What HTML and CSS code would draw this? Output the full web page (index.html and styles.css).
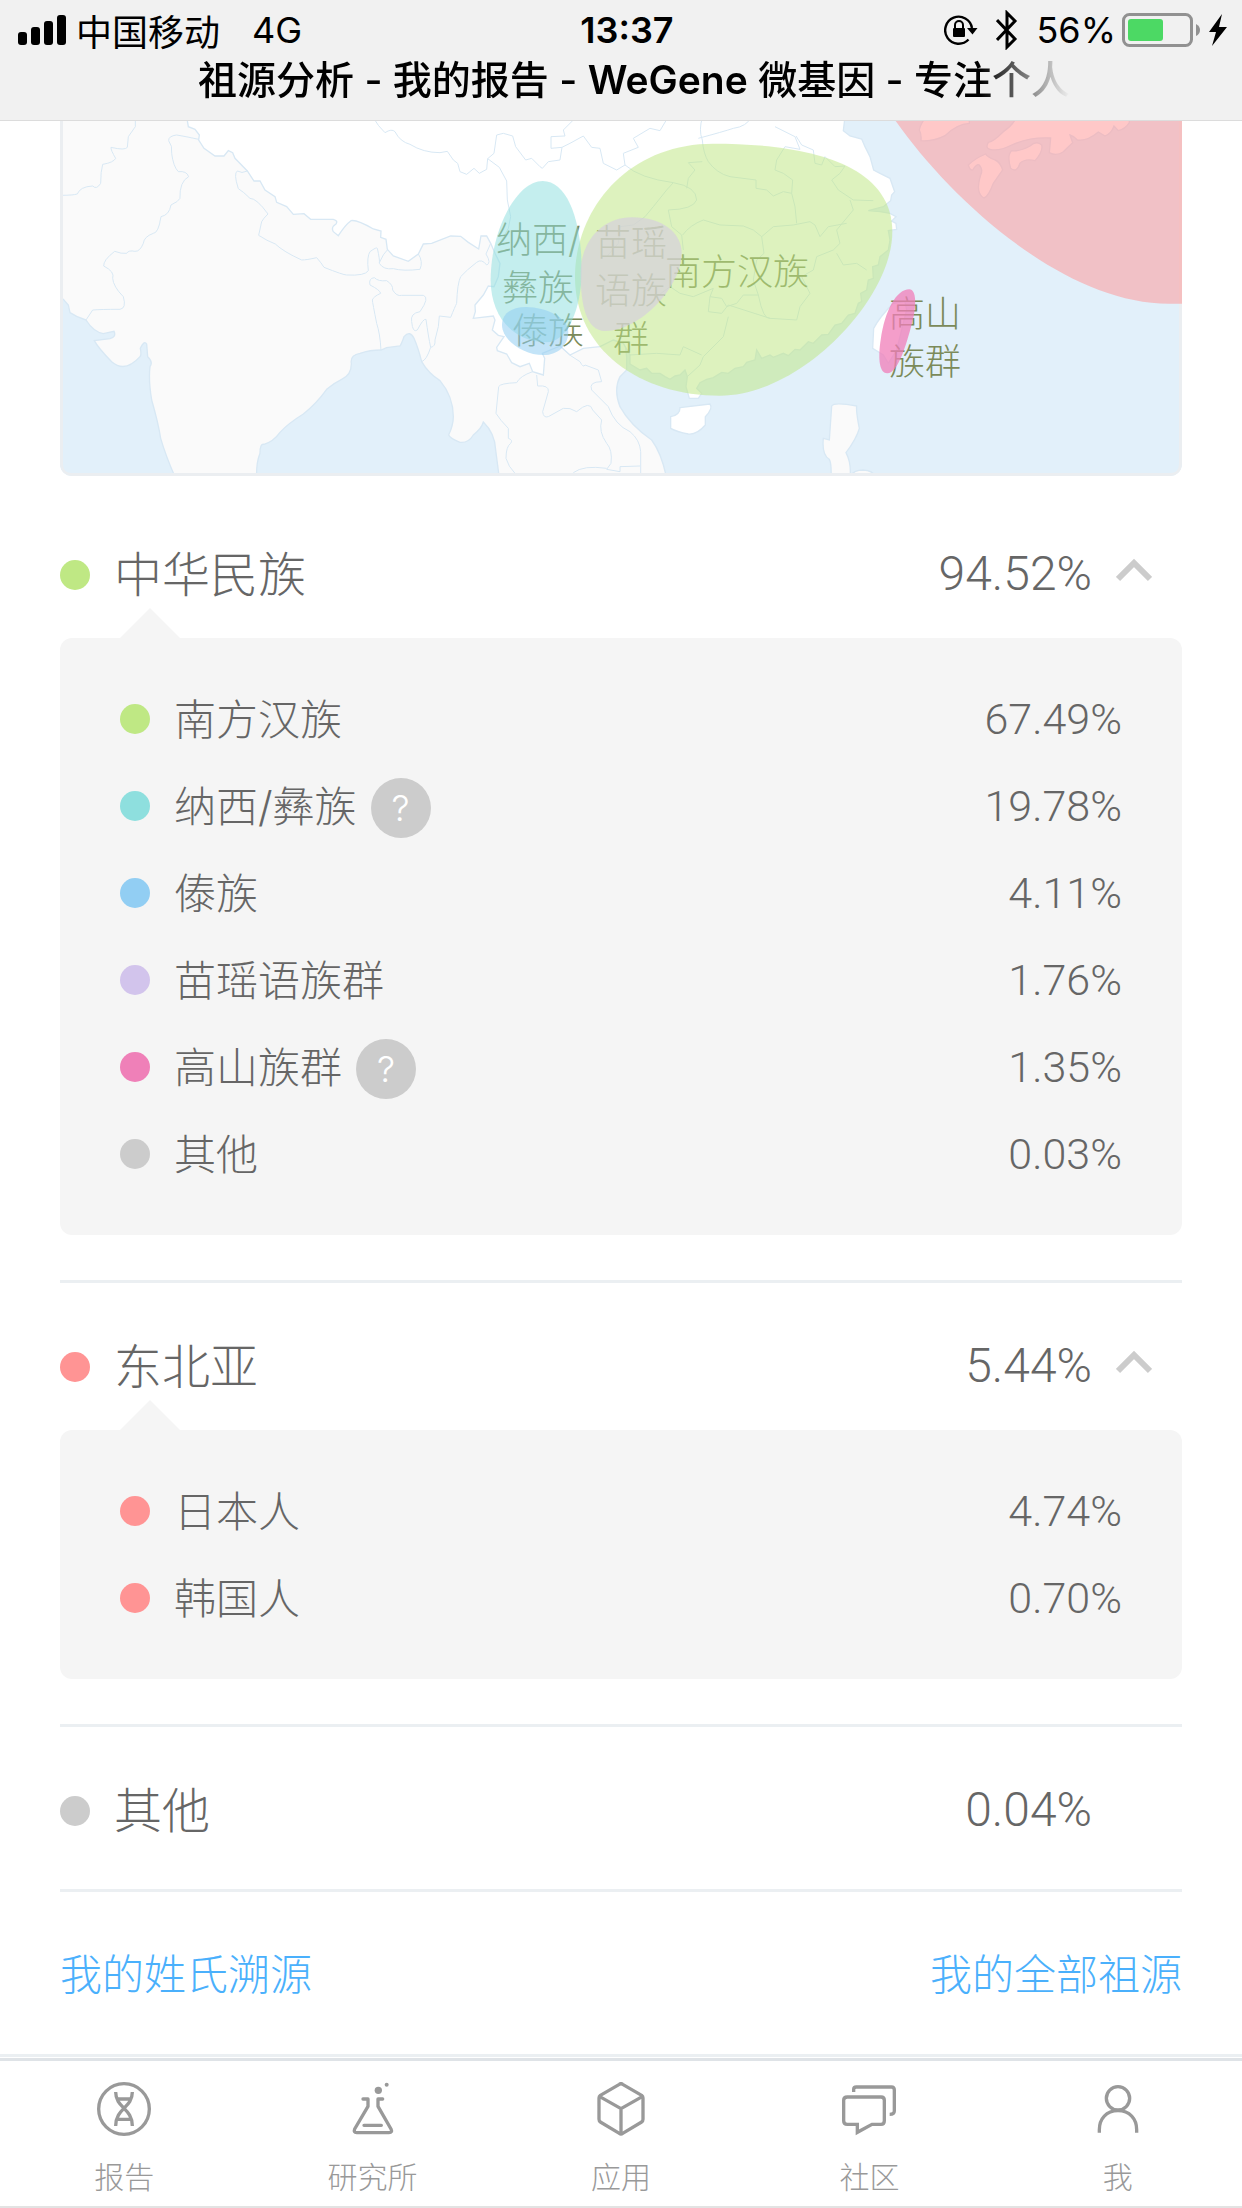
FILE: index.html
```html
<!DOCTYPE html>
<html lang="zh-CN">
<head>
    <meta charset="UTF-8">
    <meta name="viewport" content="width=device-width, initial-scale=1.0">
    <title>祖源分析 - 我的报告 - WeGene 微基因</title>
    <link rel="stylesheet" href="styles.css">
</head>
<body>
    <header class="header">
        <div class="status">
            <div class="status-left">
                <svg class="signal" width="48" height="30" viewBox="0 0 48 30" aria-hidden="true">
                    <rect x="0" y="17" width="9" height="13" rx="3"/>
                    <rect x="13" y="12" width="9" height="18" rx="3"/>
                    <rect x="26" y="6" width="9" height="24" rx="3"/>
                    <rect x="39" y="0" width="9" height="30" rx="3"/>
                </svg>
                <span>中国移动</span>
                <span class="network">4G</span>
            </div>
            <time class="clock">13:37</time>
            <div class="status-right">
                <svg width="34" height="32" viewBox="0 0 34 32" aria-hidden="true">
                    <path d="M24.500 25.500A13.500 13.500 0 1 1 28 14" fill="none" stroke="#000" stroke-width="2.400"/>
                    <path d="M23 14h10.500l-5 6.500z"/>
                    <rect x="9" y="14" width="12" height="9" rx="1"/>
                    <path d="M11 14v-3a4 4 0 0 1 8 0v3" fill="none" stroke="#000" stroke-width="2"/>
                </svg>
                <svg class="bluetooth" width="22" height="40" viewBox="0 0 22 40" aria-hidden="true">
                    <path d="M1 10l18 19-8 8V3l8 8L1 30" fill="none" stroke="#000" stroke-width="3"/>
                </svg>
                <span>56%</span>
                <svg width="80" height="34" viewBox="0 0 80 34" aria-hidden="true">
                    <rect x="1.500" y="1.500" width="68" height="31" rx="6" fill="none" stroke="#919191" stroke-width="3"/>
                    <rect x="6" y="6" width="35" height="22" rx="3" fill="#4cd964"/>
                    <path d="M74 11q4 2 4 6t-4 6z" fill="#919191"/>
                </svg>
                <svg width="20" height="34" viewBox="0 0 20 34" aria-hidden="true">
                    <path d="M14 1L1 19h7L4 33l15-19h-8z"/>
                </svg>
            </div>
        </div>
        <h1 class="title">祖源分析 - 我的报告 - <b class="brand">WeGene</b> 微基因 - 专注个人</h1>
    </header>

    <main class="content">
        <svg class="map" viewBox="60 121 1122 355" role="img" aria-label="祖源分布地图">
            <rect class="sea" x="60" y="110" width="1122" height="366"/>
            <!-- mainland -->
            <g transform="translate(40 110) scale(.33333)">
                <path class="land" d="M50 0V560L70 568 85 585 90 608Q110 622 138 630Q160 665 190 671L222 664Q230 680 210 686L163 692Q175 715 215 755Q255 790 300 740Q305 735 301 715Q312 690 320 702L323 740Q340 755 330 770Q325 810 335 870Q355 940 362 985Q378 1040 407 1105H650Q648 1060 660 1030Q660 1000 672 1003Q700 995 720 967Q745 940 790 912Q830 880 860 838Q880 820 905 808Q935 795 934 760Q930 735 960 730Q990 720 1023 720L1040 713 1080 708Q1085 700 1092 680Q1110 660 1122 685Q1135 715 1145 755Q1165 790 1200 812Q1240 860 1240 920Q1240 945 1226 975Q1230 985 1260 997Q1285 1000 1300 975Q1325 955 1330 936Q1365 970 1367 1020L1378 1105H1880Q1865 1030 1835 990Q1770 945 1740 890Q1720 840 1740 800L1760 780V740L1700 200 1300 0Z"/>
                <path class="china" d="M440 20L445 50 465 58 478 75 476 90 492 115 525 138H552L565 122 578 128 585 145 622 183 642 213H660L675 240 705 260 710 277 740 290 760 313 792 311 812 328H880Q895 332 888 342Q872 352 880 365L895 377Q915 345 933 332Q950 328 1000 357L1023 363 1022 382 1038 388 1042 418 1060 438 1105 454 1135 432 1150 402 1175 400 1232 378 1262 379 1285 397 1316 417 1323 378 1340 378 1352 400 1365 430 1380 460 1375 500 1362 530 1345 528 1330 555 1305 585 1306 605 1300 625 1360 618 1365 630 1357 660 1375 676 1392 680 1370 712 1372 722 1400 732 1415 758 1440 770 1468 760 1478 785 1510 795 1514 745 1507 730 1560 708 1590 735 1630 715 1680 710 1720 690 1750 700 1770 735 1770 762 1800 780 1820 775 1835 790 1860 790 1875 800 1890 808 1905 798 1920 795 1935 780 1942 800 1938 830 1948 865H1975L1985 850 1970 835 1980 818 2000 808 2020 803 2045 787 2065 790 2085 775 2110 770 2120 757 2145 750 2150 720 2165 745 2190 735 2200 742 2230 730 2245 737 2265 718 2280 720 2305 695 2320 700 2345 675 2365 673 2385 645 2405 640 2425 615 2445 610 2455 580 2465 575 2462 550 2480 540 2485 510 2500 505 2498 470 2515 465 2520 440 2545 420 2550 390 2545 362 2570 358 2568 340 2555 333 2568 320 2550 310 2520 305 2485 302 2530 290 2552 272 2555 255 2564 245 2550 205 2520 190 2501 180 2490 140 2475 110 2465 87 2430 78 2410 62 2415 20Z"/>
                <g class="borders">
                    <path d="M286 20V50L265 80 262 112Q255 122 213 112Q212 120 227 145Q220 158 188 163Q182 185 182 220Q170 240 158 228Q120 230 112 252Q100 256 60 256"/>
                    <path d="M476 88Q440 80 410 75Q385 78 386 92Q398 108 395 130Q400 170 415 185Q440 182 446 200Q418 215 420 265Q415 275 393 285Q388 315 363 320Q355 370 340 370Q312 380 310 400Q300 425 285 424Q265 420 260 430Q245 432 224 424Q190 450 191 468Q225 485 218 505Q220 530 250 560Q260 595 240 598Q180 598 158 600L138 630"/>
                    <path d="M622 183Q605 192 592 183Q580 190 595 236Q610 245 630 265Q650 265 684 312Q670 325 665 335L656 376Q680 392 706 402Q730 425 785 450Q800 450 830 443Q845 460 852 472Q910 495 920 495Q975 498 985 482Q980 440 990 425Q1010 410 1012 415Q1020 450 1018 460Q1030 480 1060 476Q1090 484 1140 478Q1150 455 1135 432M1018 458Q1030 430 1042 420"/>
                    <path d="M1023 720Q1020 670 1010 640Q998 580 997 570Q1000 560 1022 550Q1020 540 990 525Q985 505 1003 503Q1015 515 1040 512Q1060 525 1058 540Q1070 560 1085 556H1150Q1170 562 1140 605Q1110 610 1115 635Q1118 670 1132 660Q1150 625 1158 628Q1165 680 1172 712Q1160 750 1145 755M1172 712Q1187 710 1185 690L1195 650 1198 618 1232 622Q1245 590 1250 580Q1252 520 1262 500Q1280 480 1310 457Q1325 445 1340 465Q1355 460 1338 432L1352 400"/>
                    <path d="M998 20Q1015 50 1035 68Q1055 55 1065 65Q1080 95 1110 103Q1150 128 1200 128L1222 124 1240 150 1253 160 1260 185 1280 193 1302 175 1318 190 1340 178 1343 146 1362 130 1370 75 1390 70 1418 78 1427 110 1457 150 1475 145 1500 170 1507 175 1525 155 1560 150 1566 112 1533 115V80L1575 78 1570 60 1610 20"/>
                    <path d="M1343 146L1378 172 1400 213 1402 270 1412 320 1405 355 1380 400M1566 112L1590 100 1630 78 1655 112 1680 115 1690 160 1730 180 1755 165 1750 130 1795 112 1780 85 1830 55 1860 62 1885 20"/>
                    <path d="M1988 20Q1975 60 1987 90Q1990 130 2005 155Q2030 190 2070 200L2148 210V235L2180 240 2200 258 2230 245 2255 250 2258 210 2230 190 2205 180 2210 150 2235 110 2280 118 2265 80 2205 50M1975 85Q2050 65 2080 55Q2120 50 2135 20M2268 78L2285 105 2320 120 2325 160 2345 165 2355 140 2385 170 2415 168 2400 190 2375 210 2395 240 2440 270 2500 272"/>
                    <path d="M1755 165Q1800 205 1900 218L1880 240 1840 290 1815 320 1780 345 1740 350 1735 400 1700 440M1900 218Q1970 230 1970 270Q1960 298 1885 300L1895 350 1925 375 1930 420M1987 155L1945 158 1965 180 1945 205 1940 235M1928 375Q1950 345 1990 330L2040 345 2110 348 2140 360 2165 380 2200 350 2260 345 2310 335 2325 345 2340 380 2365 350 2420 340"/>
                    <path d="M2255 250L2265 290 2270 340M2165 380L2172 430 2150 450 2140 510 2155 555 2110 555 2090 580 2060 590 2045 565 2010 560 2020 535 1960 560 1920 550 1890 530 1850 560M2155 555Q2170 630 2190 625L2270 630 2280 590 2310 550 2285 500 2320 480 2330 440 2380 420 2400 400 2390 360 2440 300 2430 270M2065 620L2050 680 1990 740 1980 765 1942 800M2390 430L2410 465 2450 460 2480 480M1770 735L1850 730 1920 735 1930 710 1985 735M2010 560L2005 605 2045 610 2065 585 2190 625"/>
                    <path d="M1478 785Q1440 798 1430 818Q1380 820 1376 830L1368 910Q1380 930 1405 955V985Q1420 990 1412 1000Q1398 1010 1398 1045Q1405 1070 1425 1090M1490 795L1493 828Q1528 825 1525 845L1508 905Q1510 925 1525 920L1570 895Q1590 892 1610 905Q1650 870 1658 900L1685 930Q1675 965 1700 1000Q1718 1020 1713 1060L1700 1078L1740 1085V1070L1800 1068M1560 708Q1590 740 1620 755Q1630 775 1635 765L1675 780 1685 815Q1645 815 1655 840L1705 890Q1725 945 1770 965Q1800 990 1802 1025V1105M1600 1088Q1630 1065 1700 1075"/>
                </g>
            </g>
            <!-- islands -->
            <g transform="translate(480 110) scale(.33333)">
                <path class="china" d="M600 893L690 882Q700 895 676 920V945Q650 975 625 972Q590 965 572 955V920Q600 915 600 893Z"/>
                <path class="china" d="M1240 580Q1200 620 1181 655L1178 715 1210 735 1225 760 1250 720 1280 600 1275 575Z"/>
                <path class="land" d="M1055 888Q1062 875 1130 888Q1128 905 1138 955Q1130 985 1098 1028Q1115 1060 1110 1105H1053Q1055 1060 1048 1048Q1025 1035 1030 985L1048 990Z"/>
                <path class="land" d="M1110 1105Q1115 1080 1150 1080Q1185 1083 1185 1105Z"/>
            </g>
            <g transform="translate(840 110) scale(.33333)">
                <path class="china" d="M258 20Q240 45 238 60Q245 72 243 92Q280 95 315 77Q350 42 388 40V20Z"/>
                <path class="china" d="M530 20Q520 45 490 65Q460 95 445 97Q435 115 450 118Q475 125 515 105Q570 80 632 84L628 128Q650 140 670 125Q685 110 698 98L690 75Q705 80 712 90Q740 95 775 66L795 78Q815 70 822 48L835 62Q855 58 868 38V20Z"/>
                <path class="china" d="M437 132Q405 145 385 165Q390 182 398 180Q410 160 418 165Q430 180 422 195Q405 250 432 264Q445 260 460 220L488 180Q480 155 465 150Q440 140 437 132Z"/>
                <path class="china" d="M570 108Q590 90 605 105Q610 125 585 152Q555 145 540 160Q530 190 512 175Q500 135 515 122Q540 125 570 108Z"/>
            </g>
            <path class="frame" d="M61.500 110V464Q61.500 474.500 72 474.500H1170Q1180.500 474.500 1180.500 464V110"/>
            <!-- region names sit below the tinted areas -->
            <g class="names">
                <text x="496" y="253">纳西/</text>
                <text x="502" y="301">彝族</text>
                <text x="512" y="344">傣族</text>
                <text x="595" y="256">苗瑶</text>
                <text x="595" y="304">语族</text>
                <text x="613" y="352">群</text>
                <text x="665" y="285">南方汉族</text>
                <text x="889" y="327">高山</text>
                <text x="889" y="375">族群</text>
            </g>
            <g transform="translate(480 110) scale(.33333)">
                <path fill="#bee683" opacity=".52" d="M700 101C930 101 1237 140 1237 365C1237 570 960 857 720 857C480 857 285 720 285 500C285 300 440 101 700 101Z"/>
                <path fill="#8edfde" opacity=".52" d="M188 213C265 213 305 340 305 480C305 600 260 697 200 697C100 697 32 620 32 510C32 360 110 213 188 213Z"/>
                <path fill="#92cef3" opacity=".55" d="M138 591C200 591 265 625 265 665C265 705 235 735 190 735C130 735 66 690 66 645C66 610 95 591 138 591Z"/>
                <path fill="#d5cedd" opacity=".68" d="M455 322C550 322 605 370 605 430C605 530 480 663 375 663C320 663 302 590 302 490C302 390 370 322 455 322Z"/>
                <path fill="#f07db8" opacity=".75" d="M1288 538C1310 538 1310 590 1296 640C1280 700 1255 790 1222 790C1195 790 1195 735 1202 690C1215 600 1250 538 1288 538Z"/>
            </g>
            <path fill="#ff9595" opacity=".52" transform="translate(840 110) scale(.33333)" d="M158 20C330 270 680 590 1000 581H1026V20Z"/>
        </svg>

        <section class="group">
            <div class="group-head">
                <span class="dot green"></span>
                <h2 class="name">中华民族</h2>
                <span class="value">94.52%</span>
                <button class="toggle" type="button" aria-label="收起中华民族" aria-expanded="true">
                    <svg width="36" height="24" viewBox="0 0 36 24"><path d="M2 21L18 5l16 16"/></svg>
                </button>
            </div>
            <ul class="panel">
                <li class="row"><span class="dot green"></span><span class="name">南方汉族</span><span class="value">67.49%</span></li>
                <li class="row"><span class="dot teal"></span><span class="name">纳西/彝族 <button class="help" type="button" aria-label="纳西/彝族说明">?</button></span><span class="value">19.78%</span></li>
                <li class="row"><span class="dot blue"></span><span class="name">傣族</span><span class="value">4.11%</span></li>
                <li class="row"><span class="dot purple"></span><span class="name">苗瑶语族群</span><span class="value">1.76%</span></li>
                <li class="row"><span class="dot pink"></span><span class="name">高山族群 <button class="help" type="button" aria-label="高山族群说明">?</button></span><span class="value">1.35%</span></li>
                <li class="row"><span class="dot gray"></span><span class="name">其他</span><span class="value">0.03%</span></li>
            </ul>
        </section>

        <section class="group">
            <div class="group-head">
                <span class="dot red"></span>
                <h2 class="name">东北亚</h2>
                <span class="value">5.44%</span>
                <button class="toggle" type="button" aria-label="收起东北亚" aria-expanded="true">
                    <svg width="36" height="24" viewBox="0 0 36 24"><path d="M2 21L18 5l16 16"/></svg>
                </button>
            </div>
            <ul class="panel">
                <li class="row"><span class="dot red"></span><span class="name">日本人</span><span class="value">4.74%</span></li>
                <li class="row"><span class="dot red"></span><span class="name">韩国人</span><span class="value">0.70%</span></li>
            </ul>
        </section>

        <section class="group group-last">
            <div class="group-head">
                <span class="dot gray"></span>
                <h2 class="name">其他</h2>
                <span class="value">0.04%</span>
            </div>
        </section>

        <div class="links">
            <a href="#surname">我的姓氏溯源</a>
            <a href="#all">我的全部祖源</a>
        </div>
    </main>

    <nav class="tabs">
        <a class="tab" href="#report">
            <svg class="tab-icon" viewBox="291 127 162 162">
                <circle cx="372" cy="208" r="76"/>
                <path d="M347 157C347 205 397 205 397 259M397 157C397 205 347 205 347 259M353 178H391M353 239H391"/>
            </svg>
            <span>报告</span>
        </a>
        <a class="tab" href="#lab">
            <svg class="tab-icon" viewBox="1036 127 162 162">
                <path stroke-linecap="round" stroke-linejoin="round" d="M1087 178H1102V200L1062 268Q1058 279 1068 279H1165Q1176 279 1171 268L1132 200V178H1146M1090 257H1142"/>
                <circle class="solid" cx="1133" cy="152" r="11"/>
                <circle class="solid" cx="1158" cy="135" r="6"/>
            </svg>
            <span>研究所</span>
        </a>
        <a class="tab" href="#apps">
            <svg class="tab-icon" viewBox="158 127 162 162">
                <path stroke-linejoin="round" d="M234 134Q239 130 244 134L301 167Q305 170 305 175V239Q305 244 301 247L244 281Q239 285 234 281L177 247Q173 244 173 239V175Q173 170 177 167ZM174 170L239 207 304 170M239 207V283"/>
            </svg>
            <span>应用</span>
        </a>
        <a class="tab" href="#community">
            <svg class="tab-icon" viewBox="906 127 162 162">
                <path d="M922 172H1023Q1033 172 1033 182V243Q1033 254 1023 254H996L952 278V254H922Q911 254 911 243V182Q911 172 922 172ZM941 157V149Q941 142 949 142H1054Q1063 142 1063 151V214Q1063 224 1049 224"/>
            </svg>
            <span>社区</span>
        </a>
        <a class="tab" href="#me">
            <svg class="tab-icon" viewBox="1650 127 162 162">
                <ellipse cx="1731" cy="176" rx="35" ry="35"/>
                <path d="M1675 279V270C1675 237 1696 213 1731 213C1766 213 1787 237 1787 270V279"/>
            </svg>
            <span>我</span>
        </a>
    </nav>
</body>
</html>
```
FILE: styles.css
```css
* {
    box-sizing: border-box;
}

body {
    margin: 0;
    min-height: 100vh;
    display: flex;
    flex-direction: column;
    background-color: #fff;
    color: #666;
    font-family: Inter, "Noto Sans CJK SC", sans-serif;
    font-weight: 300;
}

h1, h2, ul {
    margin: 0;
    padding: 0;
    font-weight: inherit;
    list-style: none;
}

h2 {
    font-size: inherit;
}

button {
    padding: 0;
    border: 0;
    background: none;
    font: inherit;
    cursor: pointer;
}

a {
    text-decoration: none;
}

/* header */
.header {
    height: 121px;
    background-color: #f1f1f1;
    border-bottom: 1px solid #dcdcdc;
    color: #000;
}

.status {
    display: grid;
    grid-template-columns: 1fr auto 1fr;
    align-items: center;
    height: 60px;
    padding: 0 14px 0 18px;
    font-size: 36px;
    font-weight: 400;
}

.status-left {
    display: flex;
    align-items: center;
    gap: 10px;
}

.status-right {
    display: flex;
    align-items: center;
    justify-content: flex-end;
    gap: 6px;
}

.network {
    margin-left: 22px;
}

.bluetooth {
    margin: 0 12px;
}

.clock {
    padding-left: 8px;
    font-weight: 600;
}

.title {
    width: fit-content;
    margin: 0 auto;
    padding-left: 26px;
    white-space: nowrap;
    font-size: 39px;
    line-height: 40px;
    font-weight: 500;
    -webkit-mask-image: linear-gradient(to left, transparent, #000 90px);
    mask-image: linear-gradient(to left, transparent, #000 90px);
}

.brand {
    font-weight: 600;
}

/* map */
.content {
    padding: 0 60px;
    border-bottom: 3px solid #ebeff2;
}

.map {
    display: block;
    width: 100%;
    height: auto;
    margin-bottom: 15px;
    border-radius: 0 0 12px 12px;
}

.sea {
    fill: #e2f0fa;
}

.land {
    fill: #fafafa;
    stroke: #d8e8f4;
    stroke-width: 4;
}

.china {
    fill: #fff;
    stroke: #d8e8f4;
    stroke-width: 4;
}

.borders {
    fill: none;
    stroke: #d8e8f4;
    stroke-width: 3;
}

.frame {
    fill: none;
    stroke: #ebeef1;
    stroke-width: 3;
}

.names {
    fill: #7b8a59;
    font-size: 36px;
}

/* groups */
.group {
    padding: 21px 0 45px;
    border-bottom: 3px solid #ebeff2;
}

.group-last {
    padding-bottom: 15px;
}

.group-head {
    display: grid;
    grid-template-columns: 30px 1fr auto 36px;
    align-items: center;
    column-gap: 24px;
    height: 126px;
    padding-right: 30px;
    font-size: 48px;
}

.value {
    font-family: Roboto, "Liberation Sans", sans-serif;
    font-size: 43px;
}

.group-head .value {
    padding-bottom: 3px;
    font-size: 48px;
}

.dot {
    width: 30px;
    height: 30px;
    border-radius: 50%;
}

.green { background-color: #bfe884; }
.teal { background-color: #8edfde; }
.blue { background-color: #92cef3; }
.purple { background-color: #d2c4ec; }
.pink { background-color: #ef80b8; }
.red { background-color: #ff9494; }
.gray { background-color: #ccc; }

.name {
    padding-bottom: 4px;
}

.group-head .name {
    padding-bottom: 8px;
}

.toggle {
    padding-bottom: 10px;
}

.toggle svg {
    display: block;
    fill: none;
    stroke: #ccc;
    stroke-width: 6;
}

.panel {
    position: relative;
    padding: 37px 60px 38px;
    border-radius: 12px;
    background-color: #f5f5f5;
}

/* pointer up to the group name */
.panel::before {
    content: "";
    position: absolute;
    left: 60px;
    bottom: 100%;
    border: 30px solid transparent;
    border-top: 0;
    border-bottom-color: #f5f5f5;
}

.row {
    display: grid;
    grid-template-columns: 30px 1fr auto;
    align-items: center;
    column-gap: 24px;
    height: 87px;
    font-size: 42px;
}

.row .name {
    display: flex;
    align-items: center;
    gap: 14px;
}

.help {
    width: 60px;
    height: 60px;
    margin-top: 8px;
    border-radius: 50%;
    background-color: #ccc;
    color: #fff;
    font-size: 36px;
}

.links {
    display: flex;
    justify-content: space-between;
    align-items: center;
    height: 162px;
    padding-bottom: 4px;
    font-size: 42px;
}

.links a {
    color: #4ab0fc;
}

/* bottom tabs */
.tabs {
    display: flex;
    flex: 1;
    margin-top: 1px;
    border-top: 3px solid #dfe3e7;
    border-bottom: 2px solid #e3e3e3;
}

.tab {
    flex: 1;
    display: flex;
    flex-direction: column;
    align-items: center;
    gap: 19px;
    padding-top: 21px;
    color: #999;
    font-size: 30px;
    line-height: 44px;
}

.tab-icon {
    width: 54px;
    height: 54px;
    fill: none;
    stroke: #999;
    stroke-width: 10;
}

.tab-icon .solid {
    fill: #999;
    stroke: none;
}
```
